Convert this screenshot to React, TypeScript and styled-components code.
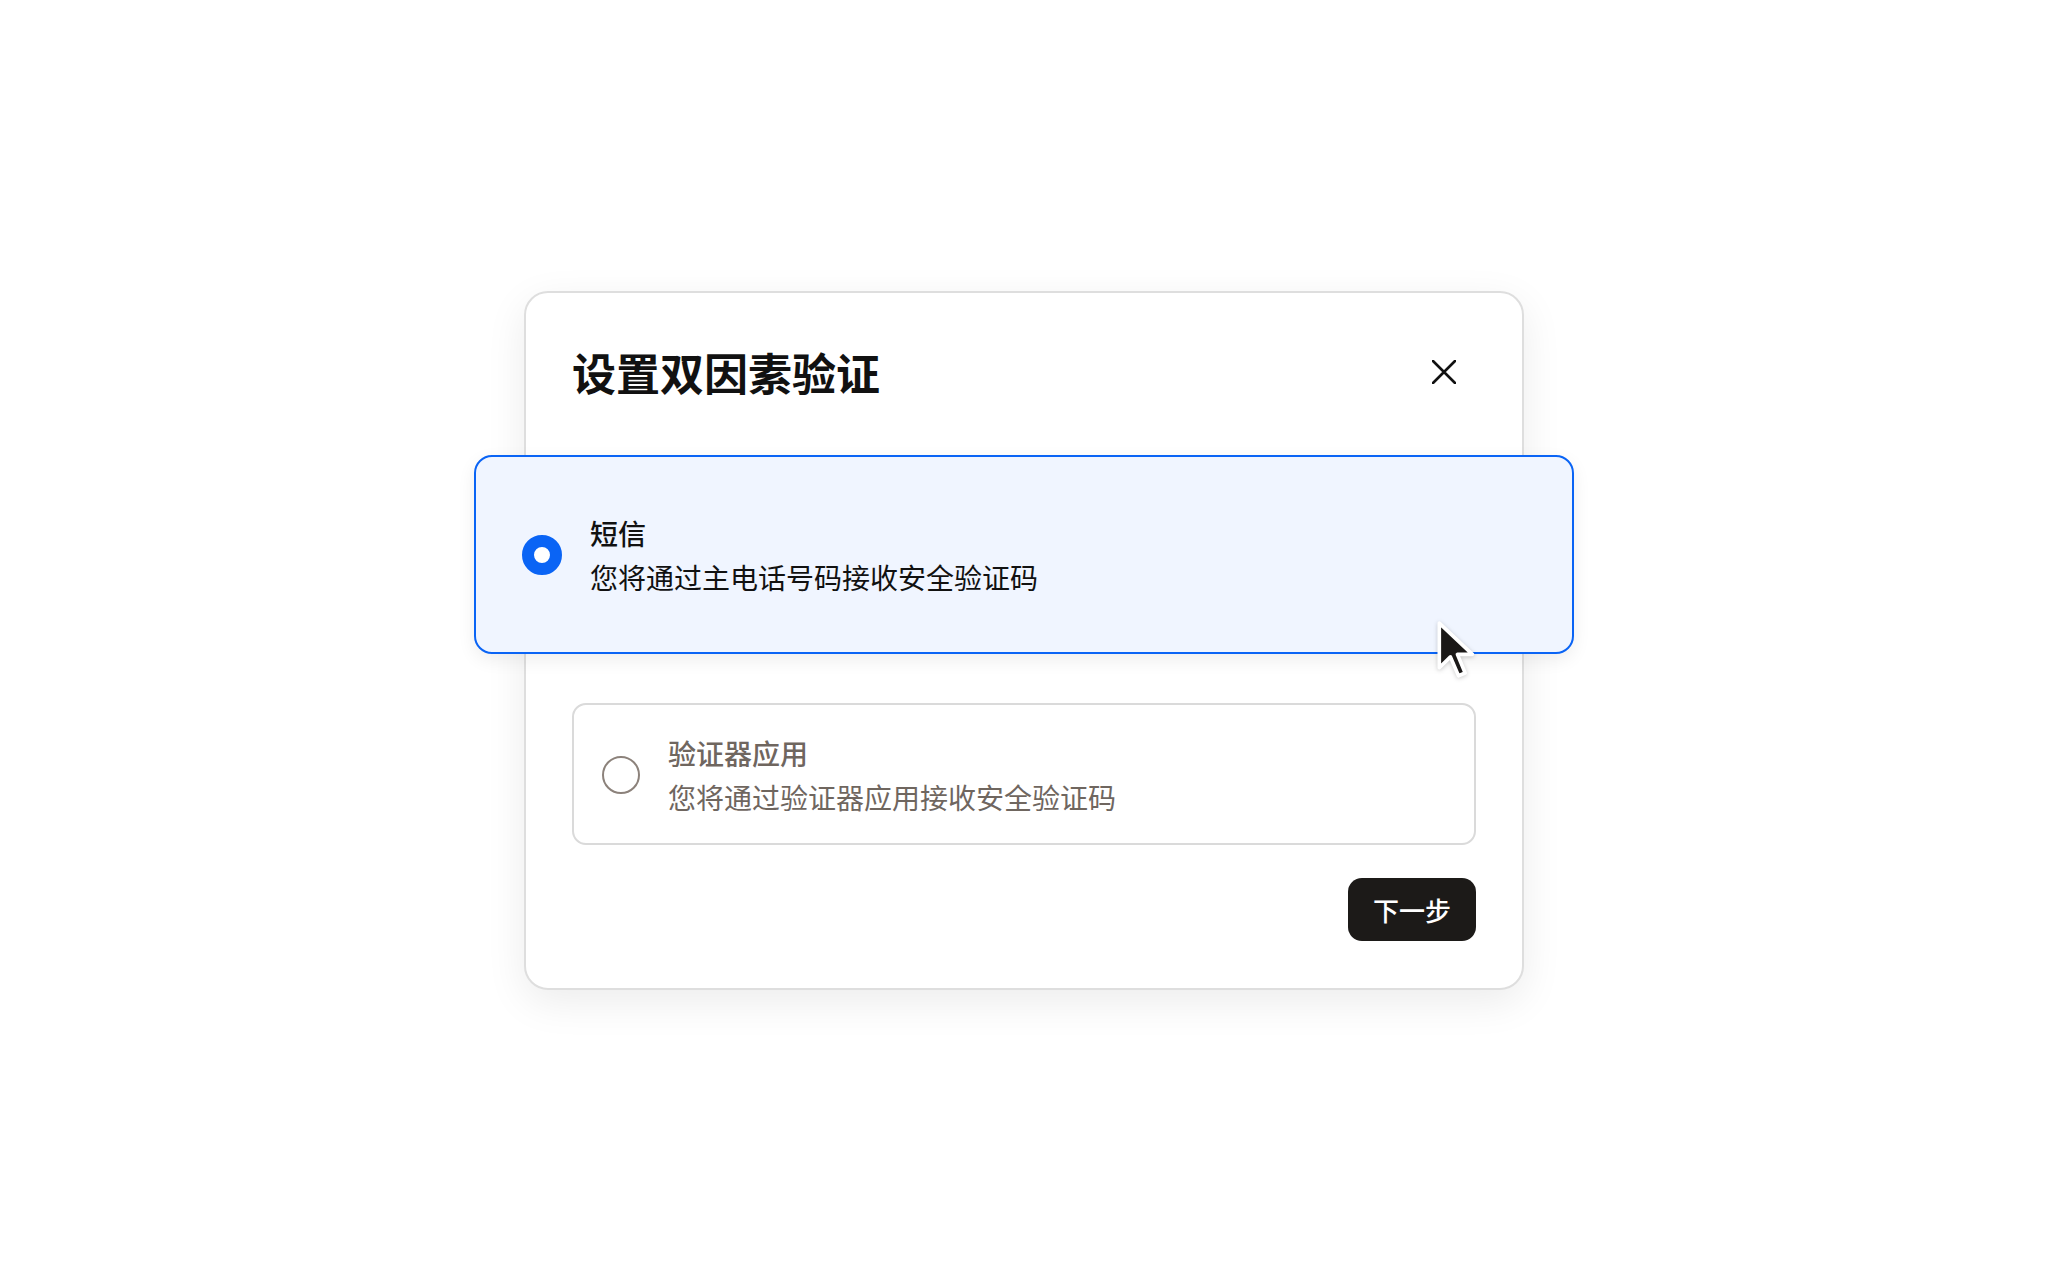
import React, { useState } from 'react';
import styled, { createGlobalStyle } from 'styled-components';

const GlobalStyle = createGlobalStyle`
  html, body {
    margin: 0;
    padding: 0;
    background: #ffffff;
  }
  body {
    font-family: 'Noto Sans CJK SC', 'Noto Sans', sans-serif;
    color: #111111;
  }
  * {
    box-sizing: border-box;
  }
`;

const Page = styled.div`
  width: 100vw;
  height: 100vh;
  display: flex;
  align-items: center;
  justify-content: center;
`;

const Dialog = styled.div`
  position: relative;
  width: 1000px;
  padding: 46px 46px 47px;
  background: #ffffff;
  border: 2px solid #dedede;
  border-radius: 24px;
  box-shadow: 0 12px 40px rgba(0, 0, 0, 0.08);
  display: flex;
  flex-direction: column;
`;

const Header = styled.div`
  height: 66px;
  display: flex;
  align-items: center;
  justify-content: space-between;
  margin-bottom: 50px;
`;

const Title = styled.h2`
  margin: 0;
  font-size: 44px;
  font-weight: 700;
  line-height: 66px;
  color: #111111;
`;

const CloseButton = styled.button`
  width: 48px;
  height: 48px;
  margin-right: 8px;
  padding: 0;
  border: none;
  background: transparent;
  display: flex;
  align-items: center;
  justify-content: center;
  cursor: pointer;
`;

const Options = styled.div`
  display: flex;
  flex-direction: column;
  gap: 49px;
`;

const Option = styled.label<{ $active: boolean }>`
  display: flex;
  align-items: center;
  gap: 28px;
  cursor: pointer;
  border-radius: ${(p) => (p.$active ? '18px' : '14px')};
  border: 2px solid ${(p) => (p.$active ? '#0a64f5' : '#dadada')};
  background: ${(p) => (p.$active ? '#f0f5ff' : '#ffffff')};
  padding: ${(p) => (p.$active ? '55px 46px 54px' : '27px 28px 25px')};
  margin: ${(p) => (p.$active ? '0 -98px' : '0')};
  box-shadow: ${(p) => (p.$active ? '0 6px 18px rgba(0, 0, 0, 0.07)' : 'none')};
`;

const Radio = styled.span<{ $active: boolean }>`
  flex: none;
  width: ${(p) => (p.$active ? '40px' : '38px')};
  height: ${(p) => (p.$active ? '40px' : '38px')};
  border-radius: 50%;
  border: ${(p) => (p.$active ? '12px solid #0a64f5' : '2px solid #8c827b')};
  background: #ffffff;
`;

const OptionText = styled.div<{ $active: boolean }>`
  display: flex;
  flex-direction: column;
  gap: 2px;
  color: ${(p) => (p.$active ? '#111111' : '#6f665f')};
`;

const OptionTitle = styled.div`
  font-size: 28px;
  font-weight: 500;
  line-height: 42px;
`;

const OptionDesc = styled.div`
  font-size: 28px;
  font-weight: 400;
  line-height: 42px;
`;

const Footer = styled.div`
  margin-top: 33px;
  display: flex;
  justify-content: flex-end;
`;

const NextButton = styled.button`
  height: 63px;
  padding: 0 25px;
  border: none;
  border-radius: 14px;
  background: #1c1a18;
  color: #ffffff;
  font-family: 'Noto Sans CJK SC', 'Noto Sans', sans-serif;
  font-size: 26px;
  font-weight: 500;
  cursor: pointer;
`;

const Pointer = styled.svg`
  position: absolute;
  left: 909px;
  top: 326px;
  width: 42px;
  height: 64px;
  pointer-events: none;
  filter: drop-shadow(0 1px 2px rgba(0, 0, 0, 0.2));
`;

const options = [
  { id: 'sms', title: '短信', desc: '您将通过主电话号码接收安全验证码' },
  { id: 'app', title: '验证器应用', desc: '您将通过验证器应用接收安全验证码' },
];

const App = () => {
  const [selected, setSelected] = useState('sms');

  return (
    <Page>
      <GlobalStyle />
      <Dialog>
        <Header>
          <Title>设置双因素验证</Title>
          <CloseButton aria-label="关闭">
            <svg width="24" height="24" viewBox="0 0 24 24">
              <path d="M1 1 L23 23 M23 1 L1 23" stroke="#111" strokeWidth="2.6" strokeLinecap="round" />
            </svg>
          </CloseButton>
        </Header>

        <Options>
          {options.map((opt) => {
            const active = opt.id === selected;
            return (
              <Option key={opt.id} $active={active} onClick={() => setSelected(opt.id)}>
                <Radio $active={active} />
                <OptionText $active={active}>
                  <OptionTitle>{opt.title}</OptionTitle>
                  <OptionDesc>{opt.desc}</OptionDesc>
                </OptionText>
              </Option>
            );
          })}
        </Options>

        <Footer>
          <NextButton>下一步</NextButton>
        </Footer>

        <Pointer viewBox="0 0 15 23">
          <path
            d="M1.5 1.5 L1.5 17.5 L5.5 13.6 L8.4 20.4 L10.8 19.4 L8 12.7 L13.4 12.7 Z"
            fill="#1a1817"
            stroke="#ffffff"
            strokeWidth="1.3"
            strokeLinejoin="round"
          />
        </Pointer>
      </Dialog>
    </Page>
  );
};

export default App;
